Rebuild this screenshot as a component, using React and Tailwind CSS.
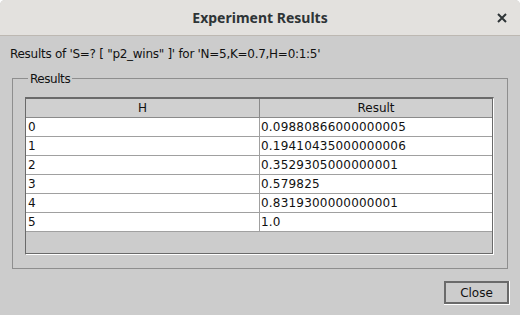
import React from "react"

const rows = [
    ["0", "0.09880866000000005"],
    ["1", "0.19410435000000006"],
    ["2", "0.3529305000000001"],
    ["3", "0.579825"],
    ["4", "0.8319300000000001"],
    ["5", "1.0"],
]

export default function App() {
    return (
        <div className="w-[520px] h-[315px] bg-white overflow-hidden">
            <div className="w-full h-full flex flex-col rounded-t-[5px] overflow-hidden bg-[#cccccc]">
                {/* title bar */}
                <div className="h-[36px] shrink-0 flex items-center justify-center relative bg-[#e3e1de] border-b border-[#bdb8b2]">
                    <span className="font-['Noto_Sans',sans-serif] font-bold text-[14px] text-[#2e3436] leading-none">
                        Experiment Results
                    </span>
                    <button className="absolute right-[12px] top-[12px] w-[12px] h-[12px] flex items-center justify-center text-[#2e3436]">
                        <svg width="10" height="10" viewBox="0 0 10 10">
                            <path d="M1 1 L9 9 M9 1 L1 9" stroke="currentColor" strokeWidth="2" />
                        </svg>
                    </button>
                </div>

                {/* body */}
                <div className="flex-1 flex flex-col px-[10px] pt-[11px] font-['DejaVu_Sans',sans-serif] text-[12px] leading-[14px] text-[#111]">
                    <p className="tracking-[-0.28px]">Results of 'S=? [ "p2_wins" ]' for 'N=5,K=0.7,H=0:1:5'</p>

                    <fieldset className="mt-[10px] mx-[2px] h-[198px] border border-[#8e8e8e] pl-[12px] pr-[13px] pt-[12px]">
                        <legend className="ml-[3px] px-[2px] tracking-[-0.45px] translate-y-[1px]">Results</legend>
                        <div className="h-[158px] flex flex-col border-l border-t-2 border-[#6a6a6a] border-r border-r-white border-b border-b-white">
                            <div className="flex-1 flex flex-col border-r border-b border-[#6a6a6a]">
                                <div className="grid grid-cols-[234px_1fr] h-[19px] shrink-0 bg-[#d0d0d0] border-b border-[#8a8a8a]">
                                    <div className="flex items-center justify-center border-r border-[#8a8a8a]">H</div>
                                    <div className="flex items-center justify-center">Result</div>
                                </div>
                                {rows.map(([h, r]) => (
                                    <div
                                        key={h}
                                        className="grid grid-cols-[234px_1fr] h-[19px] shrink-0 bg-white border-b border-[#a0a0a0]"
                                    >
                                        <div className="flex items-center pl-[2px] border-r border-[#a0a0a0]">{h}</div>
                                        <div className="flex items-center pl-[1px] tracking-[0.2px]">{r}</div>
                                    </div>
                                ))}
                                <div className="flex-1 bg-[#cccccc]" />
                            </div>
                        </div>
                    </fieldset>

                    <div className="flex justify-end mt-[12px]">
                        <div className="border-r border-b border-white">
                            <button className="w-[65px] h-[23px] border-2 border-[#6a6a6a] flex items-center justify-center text-[#111]">
                                Close
                            </button>
                        </div>
                    </div>
                </div>
            </div>
        </div>
    )
}
